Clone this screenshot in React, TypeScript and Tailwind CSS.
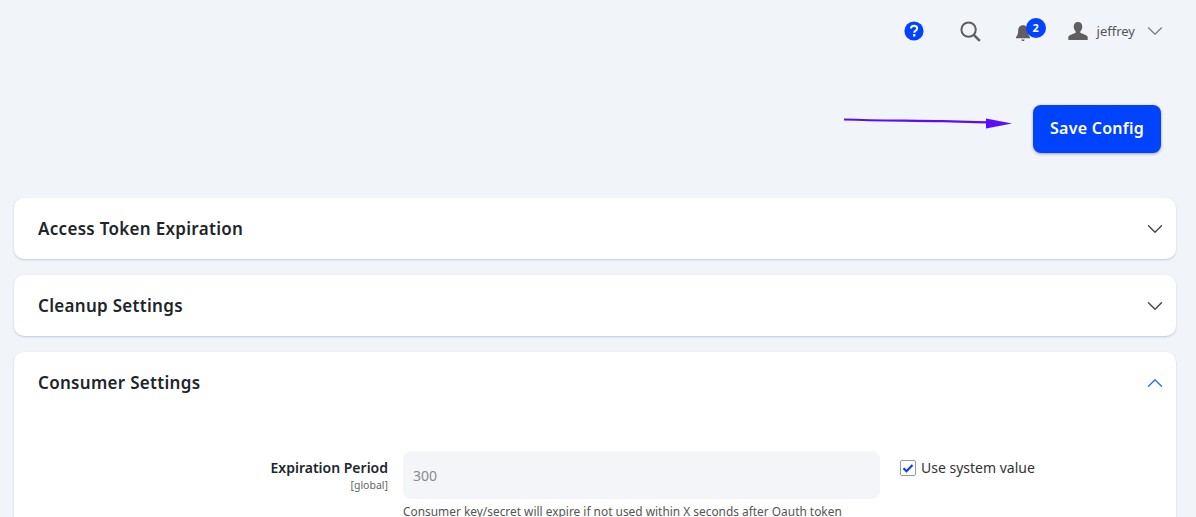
import React from 'react';
import { ChevronDown, ChevronUp } from 'lucide-react';

// Accordion card, closed or open
const SettingsCard: React.FC<{ title: string; open?: boolean; children?: React.ReactNode }> = ({ title, open, children }) => (
  <div className="bg-white rounded-[10px] shadow-[0_1px_2px_rgba(150,165,200,0.55)]">
    <div className="h-[61px] pl-6 pr-[8px] flex items-center justify-between">
      <h2 className="text-[17px] font-semibold tracking-[0.3px] text-[#212529]">{title}</h2>
      {open ? (
        <ChevronUp className="w-[26px] h-[26px] text-[#2f6bff]" strokeWidth={1.25} />
      ) : (
        <ChevronDown className="w-[26px] h-[26px] text-[#444]" strokeWidth={1.25} />
      )}
    </div>
    {children}
  </div>
);

const QuestionIcon = () => (
  <svg viewBox="0 0 20 20" className="w-5 h-5">
    <circle cx="10" cy="10" r="9.6" fill="#0043ff" />
    <path d="M7 7.6C7 5.8 8.4 4.8 10.1 4.8c1.7 0 3 1 3 2.6 0 2.4-2.9 2.4-2.9 4.4" fill="none" stroke="#fff" strokeWidth="2" />
    <rect x="9" y="13.1" width="2.4" height="2.4" fill="#fff" />
  </svg>
);

const SearchIcon = () => (
  <svg viewBox="0 0 21 21" className="w-[21px] h-[21px]" fill="none" stroke="#5f5f5f">
    <circle cx="8.6" cy="8.6" r="7.2" strokeWidth="2" />
    <path d="M13.8 13.8l6 6" strokeWidth="2.6" />
  </svg>
);

const BellIcon = () => (
  <svg viewBox="0 0 16 18" className="w-4 h-[18px]" fill="#5f5f5f">
    <path d="M8 1.2c-3 0-4.8 2.2-4.8 5.2 0 3.6-1 5.2-2.2 6.6v1.2h14V13c-1.2-1.4-2.2-3-2.2-6.6 0-3-1.800-5.200-4.800-5.200z" />
    <path d="M6.400 15.400h3.200c0 1-.7 1.600-1.600 1.600s-1.600-.6-1.600-1.600z" />
  </svg>
);

const UserIcon = () => (
  <svg viewBox="0 0 20 18" className="w-5 h-[18px]" fill="#5f5f5f">
    <path d="M10 0c2.700 0 4.300 1.900 4.300 4.500 0 2-.8 3.700-1.800 4.800-.5.6-.4 1.500.3 1.800 2.500 1.100 6.200 1.900 6.900 4V18H.3v-2.900c.7-2.100 4.400-2.900 6.900-4 .7-.3.800-1.200.3-1.800-1-1.100-1.800-2.800-1.800-4.800C5.700 1.900 7.300 0 10 0z" />
  </svg>
);

export default function App() {
  return (
    <div className="h-[517px] overflow-hidden bg-[#f1f4f9] font-['Noto_Sans',sans-serif] text-[#212529]">
      {/* Top bar */}
      <div className="h-[62px] flex items-center justify-end pr-[28px]">
        <QuestionIcon />
        <div className="ml-[36px]"><SearchIcon /></div>
        <div className="relative ml-[34px] mr-[21px] w-[32px] h-[24px] flex items-start">
          <div className="mt-[5px]"><BellIcon /></div>
          <span className="absolute left-[11px] -top-[1px] w-5 h-5 rounded-full bg-[#0043ff] text-white text-[11px] font-bold flex items-center justify-center">2</span>
        </div>
        <UserIcon />
        <span className="ml-[9px] pt-[2px] text-[13px] text-[#555]">jeffrey</span>
        <ChevronDown className="ml-[7px] w-[26px] h-[26px] text-[#777]" strokeWidth={1} />
      </div>

      {/* Actions */}
      <div className="h-[136px] pt-[43px] pr-[35px] flex justify-end items-start">
        <svg viewBox="0 0 172 12" className="w-[172px] h-3 mt-[13px] mr-[18px]">
          <path d="M1 1.500C40 2.800 70 2.400 100 3.200S130 4 145 4.400" fill="none" stroke="#5a0cff" strokeWidth="2.200" />
          <path d="M143 0.500l26 5-26 5z" fill="#5a0cff" />
        </svg>
        <button className="w-[128px] h-12 pb-[2px] rounded-lg bg-[#0043ff] text-white text-[16px] font-semibold tracking-[0.25px] shadow-[0_1px_3px_rgba(0,0,0,0.35)]">
          Save Config
        </button>
      </div>

      {/* Setting groups */}
      <div className="ml-[14px] mr-[20px] flex flex-col gap-4">
        <SettingsCard title="Access Token Expiration" />
        <SettingsCard title="Cleanup Settings" />
        <SettingsCard title="Consumer Settings" open>
          <div className="flex pt-[38px] pb-8">
            <div className="w-[374px] text-right pt-[7px]">
              <div className="text-[14px] leading-[20px] font-semibold">Expiration Period</div>
              <div className="text-[10.5px] leading-[14px] text-[#666]">[global]</div>
            </div>
            <div className="ml-[15px] w-[477px]">
              <div className="h-12 rounded-lg bg-[#f4f5f8] flex items-center pl-[10px] text-[14px] text-[#8a8a8a]">300</div>
              <p className="mt-[4px] text-[11.9px] leading-4 text-[#555] whitespace-nowrap">
                Consumer key/secret will expire if not used within X seconds after Oauth token
              </p>
            </div>
            <label className="ml-5 h-fit pt-[7px] flex items-center gap-[5px] text-[14px] leading-[20px] text-[#333]">
              <span className="w-4 h-4 rounded-[2px] border border-[#9a9a9a] bg-white flex items-center justify-center">
                <svg viewBox="0 0 12 12" className="w-3 h-3" fill="none" stroke="#0043ff" strokeWidth="2.200">
                  <path d="M1.500 6.200l3 3L10.500 3" />
                </svg>
              </span>
              Use system value
            </label>
          </div>
        </SettingsCard>
      </div>
    </div>
  );
}
